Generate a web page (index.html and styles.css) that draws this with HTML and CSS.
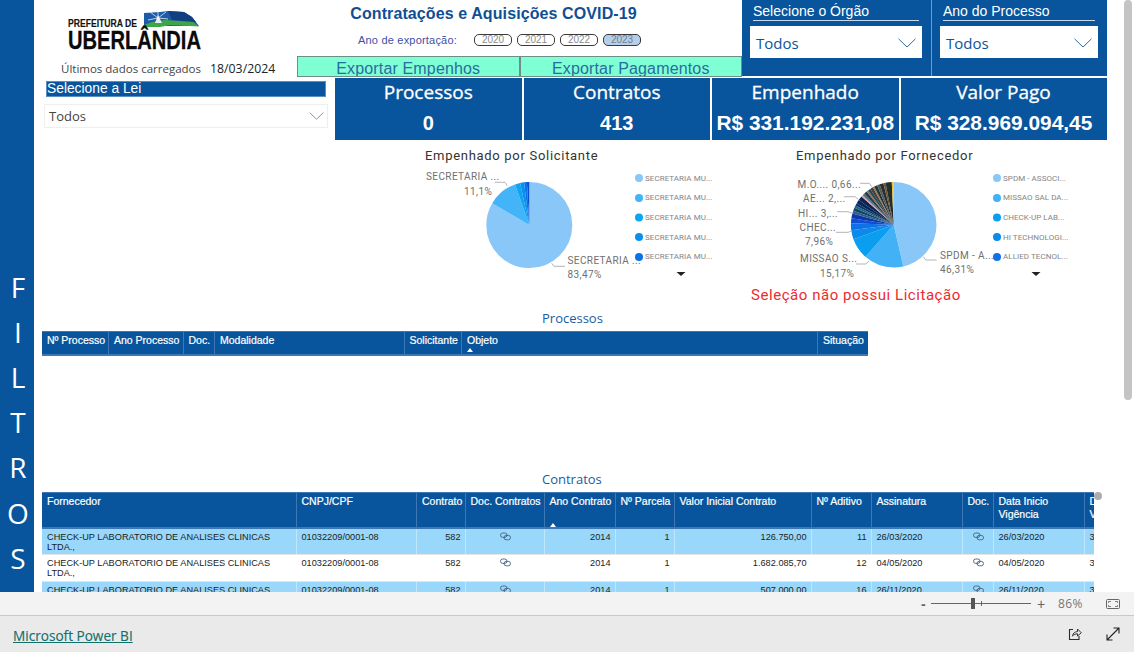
FILE: index.html
```html
<!DOCTYPE html>
<html lang="pt-BR">
<head>
<meta charset="utf-8">
<title>Contratações e Aquisições COVID-19</title>
<link rel="stylesheet" href="styles.css">
</head>
<body>
<svg class="defs" width="0" height="0" aria-hidden="true">
  <symbol id="chain" viewBox="0 0 11 9">
    <rect x="0.5" y="1" width="6.5" height="4.4" rx="2.2" fill="none" stroke="currentColor" stroke-width="0.9"/>
    <rect x="4" y="3.4" width="6.5" height="4.4" rx="2.2" fill="none" stroke="currentColor" stroke-width="0.9"/>
  </symbol>
  <symbol id="chev" viewBox="0 0 18 10">
    <path d="M0.5 0.8 L9 9 L17.5 0.8" fill="none" stroke="currentColor" stroke-width="1"/>
  </symbol>
</svg>
<div class="page">
  <div class="canvas">
    <aside class="side">
      <span>F</span><span>I</span><span>L</span><span>T</span><span>R</span><span>O</span><span>S</span>
    </aside>
    <main class="report">
      <header class="top">
        <div class="brand">
          <svg class="logo" viewBox="60 4 150 50" width="150" height="50">
            <polygon class="m-blue" points="144,13 160,12 168,11 184,12 192,17 199,26 144,26"/>
            <polygon class="m-dark" points="168,11 184,12 192,17 196,22 172,20"/>
            <polygon class="m-green" points="144,25 152,22 165,20 180,21 193,22 199,26.5 170,25 160,27 144,27"/>
            <polygon class="m-white" points="155,23 158,15 162,23"/>
            <path class="m-ray" d="M158 18 L150 12 M158 18 L166 12 M158 18 L158 11 M158 18 L148 20 M158 18 L168 19"/>
            <text class="l-small" x="68" y="26.5" textLength="69" lengthAdjust="spacingAndGlyphs">PREFEITURA DE</text>
            <text class="l-big" x="68" y="49" textLength="133" lengthAdjust="spacingAndGlyphs">UBERLÂNDIA</text>
          </svg>
          <div class="loaded"><span class="loaded-label">Últimos dados carregados</span><span class="loaded-date">18/03/2024</span></div>
        </div>
        <div class="center">
          <h1 class="title">Contratações e Aquisições COVID-19</h1>
          <div class="years">
            <span class="years-label">Ano de exportação:</span>
            <span class="pill">2020</span><span class="pill">2021</span><span class="pill">2022</span><span class="pill pill-on">2023</span>
          </div>
          <div class="exports">
            <button class="export">Exportar Empenhos</button>
            <button class="export">Exportar Pagamentos</button>
          </div>
        </div>
        <section class="slicer slicer-org">
          <div class="slicer-label">Selecione o Órgão</div>
          <div class="slicer-box"><span>Todos</span><svg class="chev-lg"><use href="#chev"/></svg></div>
        </section>
        <section class="slicer slicer-ano">
          <div class="slicer-label">Ano do Processo</div>
          <div class="slicer-box"><span>Todos</span><svg class="chev-lg"><use href="#chev"/></svg></div>
        </section>
      </header>

      <section class="second">
        <div class="lei">
          <div class="lei-label">Selecione a Lei</div>
          <div class="lei-box"><span>Todos</span><svg class="chev-sm"><use href="#chev"/></svg></div>
        </div>
        <div class="cards">
          <div class="card card-a"><div class="card-name">Processos</div><div class="card-val">0</div></div>
          <div class="card card-a"><div class="card-name">Contratos</div><div class="card-val">413</div></div>
          <div class="card card-a"><div class="card-name">Empenhado</div><div class="card-val card-money">R$ 331.192.231,08</div></div>
          <div class="card card-b"><div class="card-name">Valor Pago</div><div class="card-val card-money">R$ 328.969.094,45</div></div>
        </div>
      </section>

      <section class="charts">
        <svg class="chart chart-one" viewBox="420 145 300 165" width="300" height="165">
          <text class="c-title" x="425" y="160">Empenhado por Solicitante</text>
          <g class="pie" transform="rotate(-90 529.3 225)">
            <circle cx="529.3" cy="225" r="21.5" pathLength="100" stroke="#8AC7F9" stroke-dasharray="83.47 100"/>
            <circle cx="529.3" cy="225" r="21.5" pathLength="100" stroke="#42B4F7" stroke-dasharray="11.1 100" stroke-dashoffset="-83.47"/>
            <circle cx="529.3" cy="225" r="21.5" pathLength="100" stroke="#0BA5F2" stroke-dasharray="1.9 100" stroke-dashoffset="-94.57"/>
            <circle cx="529.3" cy="225" r="21.5" pathLength="100" stroke="#0A8FEE" stroke-dasharray="1.5 100" stroke-dashoffset="-96.47"/>
            <circle cx="529.3" cy="225" r="21.5" pathLength="100" stroke="#0A72E8" stroke-dasharray="1.1 100" stroke-dashoffset="-97.97"/>
            <circle cx="529.3" cy="225" r="21.5" pathLength="100" stroke="#0A4FD0" stroke-dasharray="0.93 100" stroke-dashoffset="-99.07"/>
          </g>
          <path class="leader" d="M495 182.3H505L507.3 185.7"/>
          <path class="leader" d="M551.7 263.3L554 266.3H565"/>
          <text class="c-label" x="426" y="180">SECRETARIA ...</text>
          <text class="c-label" x="464" y="195">11,1%</text>
          <text class="c-label" x="567.5" y="264">SECRETARIA ...</text>
          <text class="c-label" x="567.5" y="278">83,47%</text>
          <g class="legend">
            <circle cx="639" cy="178" r="4" fill="#8AC7F9"/><text x="645" y="181">SECRETARIA MU...</text>
            <circle cx="639" cy="198" r="4" fill="#42B4F7"/><text x="645" y="200">SECRETARIA MU...</text>
            <circle cx="639" cy="217.5" r="4" fill="#0BA5F2"/><text x="645" y="220">SECRETARIA MU...</text>
            <circle cx="639" cy="237" r="4" fill="#0A8FEE"/><text x="645" y="240">SECRETARIA MU...</text>
            <circle cx="639" cy="257" r="4" fill="#0A72E8"/><text x="645" y="259">SECRETARIA MU...</text>
          </g>
          <polygon class="more" points="676.5,272 685.5,272 681,276"/>
        </svg>
        <svg class="chart chart-two" viewBox="780 145 300 165" width="300" height="165">
          <text class="c-title" x="796" y="160">Empenhado por Fornecedor</text>
          <g class="pie pie-two" transform="rotate(-90 893.7 224.7)">
            <circle cx="893.7" cy="224.7" r="21.4" pathLength="100" stroke="#8AC7F9" stroke-dasharray="46.31 100"/>
            <circle cx="893.7" cy="224.7" r="21.4" pathLength="100" stroke="#42B1F5" stroke-dasharray="15.17 100" stroke-dashoffset="-46.31"/>
            <circle cx="893.7" cy="224.7" r="21.4" pathLength="100" stroke="#0A9EF0" stroke-dasharray="7.96 100" stroke-dashoffset="-61.48"/>
            <circle cx="893.7" cy="224.7" r="21.4" pathLength="100" stroke="#0A8BEC" stroke-dasharray="3.4 100" stroke-dashoffset="-69.44"/>
            <circle cx="893.7" cy="224.7" r="21.4" pathLength="100" stroke="#0E72E6" stroke-dasharray="2.7 100" stroke-dashoffset="-72.84"/>
            <circle cx="893.7" cy="224.7" r="21.4" pathLength="100" stroke="#0C4FD2" stroke-dasharray="2 100" stroke-dashoffset="-75.54"/>
            <circle cx="893.7" cy="224.7" r="21.4" pathLength="100" stroke="#0B35A8" stroke-dasharray="1.7 100" stroke-dashoffset="-77.54"/>
            <circle cx="893.7" cy="224.7" r="21.4" pathLength="100" stroke="#2F5F86" stroke-dasharray="1.1 100" stroke-dashoffset="-79.24"/>
            <circle cx="893.7" cy="224.7" r="21.4" pathLength="100" stroke="#12406A" stroke-dasharray="1.2 100" stroke-dashoffset="-80.34"/>
            <circle cx="893.7" cy="224.7" r="21.4" pathLength="100" stroke="#1E6A78" stroke-dasharray="0.9 100" stroke-dashoffset="-81.54"/>
            <circle cx="893.7" cy="224.7" r="21.4" pathLength="100" stroke="#0C3268" stroke-dasharray="1 100" stroke-dashoffset="-82.44"/>
            <circle cx="893.7" cy="224.7" r="21.4" pathLength="100" stroke="#08265A" stroke-dasharray="1.4 100" stroke-dashoffset="-83.44"/>
            <circle cx="893.7" cy="224.7" r="21.4" pathLength="100" stroke="#062650" stroke-dasharray="1.6 100" stroke-dashoffset="-84.84"/>
            <circle cx="893.7" cy="224.7" r="21.4" pathLength="100" stroke="#E59AA6" stroke-dasharray="0.7 100" stroke-dashoffset="-86.44"/>
            <circle cx="893.7" cy="224.7" r="21.4" pathLength="100" stroke="#56707F" stroke-dasharray="0.8 100" stroke-dashoffset="-87.14"/>
            <circle cx="893.7" cy="224.7" r="21.4" pathLength="100" stroke="#223C4C" stroke-dasharray="1.1 100" stroke-dashoffset="-87.94"/>
            <circle cx="893.7" cy="224.7" r="21.4" pathLength="100" stroke="#8A6F4A" stroke-dasharray="0.7 100" stroke-dashoffset="-89.04"/>
            <circle cx="893.7" cy="224.7" r="21.4" pathLength="100" stroke="#1D4A5E" stroke-dasharray="1 100" stroke-dashoffset="-89.74"/>
            <circle cx="893.7" cy="224.7" r="21.4" pathLength="100" stroke="#45403A" stroke-dasharray="1.1 100" stroke-dashoffset="-90.74"/>
            <circle cx="893.7" cy="224.7" r="21.4" pathLength="100" stroke="#A86F48" stroke-dasharray="0.6 100" stroke-dashoffset="-91.84"/>
            <circle cx="893.7" cy="224.7" r="21.4" pathLength="100" stroke="#173844" stroke-dasharray="1.2 100" stroke-dashoffset="-92.44"/>
            <circle cx="893.7" cy="224.7" r="21.4" pathLength="100" stroke="#5A5A4C" stroke-dasharray="1 100" stroke-dashoffset="-93.64"/>
            <circle cx="893.7" cy="224.7" r="21.4" pathLength="100" stroke="#282E32" stroke-dasharray="1.4 100" stroke-dashoffset="-94.64"/>
            <circle cx="893.7" cy="224.7" r="21.4" pathLength="100" stroke="#6E5434" stroke-dasharray="0.8 100" stroke-dashoffset="-96.04"/>
            <circle cx="893.7" cy="224.7" r="21.4" pathLength="100" stroke="#22302B" stroke-dasharray="2.4 100" stroke-dashoffset="-96.84"/>
            <circle cx="893.7" cy="224.7" r="21.4" pathLength="100" stroke="#E5C23A" stroke-dasharray="0.76 100" stroke-dashoffset="-99.24"/>
          </g>
          <path class="leader" d="M860 183.3H869.3L871.7 186.7"/>
          <path class="leader" d="M844 196.7H855L858.3 199.3"/>
          <path class="leader" d="M837.3 211.7H848.3L852.3 213.3"/>
          <path class="leader" d="M836 232.3H848.3L851.3 231"/>
          <path class="leader" d="M856 264H866L869 261"/>
          <path class="leader" d="M923.3 256.7L925.7 260H936.7"/>
          <text class="c-label" x="797.5" y="187.5">M.O.... 0,66...</text>
          <text class="c-label" x="803" y="202">AE... 2,...</text>
          <text class="c-label" x="798" y="216.5">HI... 3,...</text>
          <text class="c-label" x="799.5" y="231">CHEC...</text>
          <text class="c-label" x="805" y="244.5">7,96%</text>
          <text class="c-label" x="800" y="262">MISSAO S...</text>
          <text class="c-label" x="820" y="276.5">15,17%</text>
          <text class="c-label" x="940" y="258.5">SPDM - A...</text>
          <text class="c-label" x="940" y="272.5">46,31%</text>
          <g class="legend">
            <circle cx="997" cy="178" r="4" fill="#8AC7F9"/><text x="1003" y="181">SPDM - ASSOCI...</text>
            <circle cx="997" cy="198" r="4" fill="#42B1F5"/><text x="1003" y="200">MISSAO SAL DA...</text>
            <circle cx="997" cy="217.5" r="4" fill="#0A9EF0"/><text x="1003" y="220">CHECK-UP LAB...</text>
            <circle cx="997" cy="237" r="4" fill="#0A8BEC"/><text x="1003" y="240">HI TECHNOLOGI...</text>
            <circle cx="997" cy="257" r="4" fill="#0E72E6"/><text x="1003" y="259">ALLIED TECNOL...</text>
          </g>
          <polygon class="more" points="1031.5,272 1040.5,272 1036,276"/>
        </svg>
        <p class="no-bid">Seleção não possui Licitação</p>
      </section>

      <section class="processos">
        <h2 class="t-title">Processos</h2>
        <table class="grid grid-p">
          <thead><tr>
            <th class="p1">Nº Processo</th><th class="p2">Ano Processo</th><th class="p3">Doc.</th><th class="p4">Modalidade</th><th class="p5">Solicitante</th><th class="p6">Objeto<i class="sort"></i></th><th class="p7">Situação</th>
          </tr></thead>
        </table>
      </section>

      <section class="contratos">
        <h2 class="t-title">Contratos</h2>
        <div class="grid-clip">
          <table class="grid grid-c">
            <thead><tr>
              <th class="c1">Fornecedor</th><th class="c2">CNPJ/CPF</th><th class="c3">Contrato</th><th class="c4">Doc. Contratos</th><th class="c5">Ano Contrato<i class="sort"></i></th><th class="c6">Nº Parcela</th><th class="c7">Valor Inicial Contrato</th><th class="c8">Nº Aditivo</th><th class="c9">Assinatura</th><th class="c10">Doc.</th><th class="c11 wrap">Data Inicio Vigência</th><th class="c12 wrap">Data Fim Vigência</th>
            </tr></thead>
            <tbody>
              <tr class="alt"><td>CHECK-UP LABORATORIO DE ANALISES CLINICAS LTDA.,</td><td>01032209/0001-08</td><td class="num">582</td><td class="mid"><svg class="chain"><use href="#chain"/></svg></td><td class="num">2014</td><td class="num">1</td><td class="num">126.750,00</td><td class="num">11</td><td>26/03/2020</td><td class="mid"><svg class="chain"><use href="#chain"/></svg></td><td>26/03/2020</td><td>30/03/2021</td></tr>
              <tr><td>CHECK-UP LABORATORIO DE ANALISES CLINICAS LTDA.,</td><td>01032209/0001-08</td><td class="num">582</td><td class="mid"><svg class="chain"><use href="#chain"/></svg></td><td class="num">2014</td><td class="num">1</td><td class="num">1.682.085,70</td><td class="num">12</td><td>04/05/2020</td><td class="mid"><svg class="chain"><use href="#chain"/></svg></td><td>04/05/2020</td><td>30/03/2021</td></tr>
              <tr class="alt"><td>CHECK-UP LABORATORIO DE ANALISES CLINICAS LTDA.,</td><td>01032209/0001-08</td><td class="num">582</td><td class="mid"><svg class="chain"><use href="#chain"/></svg></td><td class="num">2014</td><td class="num">1</td><td class="num">507.000,00</td><td class="num">16</td><td>26/11/2020</td><td class="mid"><svg class="chain"><use href="#chain"/></svg></td><td>26/11/2020</td><td>30/03/2021</td></tr>
            </tbody>
          </table>
        </div>
        <span class="h-dot"></span>
      </section>
      <span class="v-thumb"></span>
    </main>
  </div>

  <div class="zoombar">
    <span class="z-minus">-</span>
    <div class="z-track"><span class="z-handle"></span><span class="z-tick"></span></div>
    <span class="z-plus">+</span>
    <span class="z-pct">86%</span>
    <svg class="z-fit" viewBox="0 0 14 10" width="14" height="10">
      <rect x="0.5" y="0.5" width="13" height="9" rx="1" fill="none" stroke="#666"/>
      <path d="M2.5 4V2.5H5M9 2.5H11.5V4M11.5 6V7.5H9M5 7.5H2.5V6" fill="none" stroke="#666" stroke-width="0.8"/>
    </svg>
  </div>

  <footer class="footer">
    <a class="pbi" href="#">Microsoft Power BI</a>
    <div class="foot-icons">
      <svg viewBox="0 0 14 14" width="14" height="14">
        <path d="M5 2.5H1.5V12.5H11V9" fill="none" stroke="#3A1F4A" stroke-width="1.1"/>
        <path d="M4.5 9C5 6 7 4.6 9.5 4.6V2L13.3 5.8L9.5 9V6.8C7.5 6.8 6 7.4 4.5 9Z" fill="none" stroke="#333" stroke-width="1"/>
      </svg>
      <svg viewBox="0 0 14 14" width="14" height="14">
        <path d="M1 13L13 1M7.5 1H13V6.5M1 7.5V13H6.5" fill="none" stroke="#222" stroke-width="1.1"/>
      </svg>
    </div>
  </footer>
</div>
</body>
</html>
```
FILE: styles.css
```css
* { box-sizing: border-box; }
html, body { margin: 0; height: 100%; overflow: hidden; background: #fff; }
body { font-family: "Liberation Sans", Arial, sans-serif; }
.defs { position: absolute; }
.page { display: flex; flex-direction: column; height: 652px; }

.canvas { display: flex; height: 592px; overflow: hidden; background: #fff; }
.side {
  width: 34px; flex: none; background: #08559D; color: #fff;
  display: flex; flex-direction: column; align-items: center; justify-content: flex-end;
  padding-bottom: 11px; padding-left: 2px;
  font: 28px/45.2px "Open Sans", sans-serif;
}
.report { position: relative; flex: 1; min-width: 0; }

/* top */
.top { display: flex; height: 78px; }
.brand { width: 263px; flex: none; }
.logo { display: block; margin: 4px 0 0 26px; }
.m-blue { fill: #1C5BA8; }
.m-dark { fill: #123F7F; }
.m-green { fill: #3FA648; }
.m-white { fill: #E6EEF2; }
.m-ray { stroke: #fff; stroke-width: 0.7; fill: none; }
.l-small { font: 700 11.5px "Liberation Sans", sans-serif; fill: #111; stroke: #111; stroke-width: 0.15px; }
.l-big { font: 700 25px "Liberation Sans", sans-serif; fill: #0A0A0A; stroke: #0A0A0A; stroke-width: 0.3px; }
.loaded { display: flex; margin-top: 7px; padding-left: 27px; align-items: center; color: #333; height: 15px; }
.loaded-label { font: 11.5px "Open Sans", sans-serif; width: 149px; color: #444; white-space: nowrap; }
.loaded-date { font: 12.3px "Open Sans", sans-serif; color: #222; }

.center { width: 445px; flex: none; display: flex; flex-direction: column; }
.title { margin: 5px 0 0; text-align: center; font: 700 16px/18px "Liberation Sans", sans-serif; color: #0F4F94; padding-right: 52px; letter-spacing: 0.1px; white-space: nowrap; }
.years { display: flex; align-items: center; height: 12px; margin-top: 11px; padding-left: 61px; }
.years-label { font: 11px "Liberation Sans", sans-serif; color: #3C50A8; width: 116px; letter-spacing: 0.2px; white-space: nowrap; }
.pill { width: 38px; height: 12px; margin-right: 5px; border: 1px solid #3A3A3A; border-radius: 5px; font: 10px/10px "Liberation Sans", sans-serif; color: #8A8A8A; text-align: center; }
.pill-on { background: #B5CFE9; color: #6F7F90; }
.exports { display: flex; margin-top: 10px; }
.export {
  width: 222.5px; height: 21px; padding: 0; border: 1px solid #6F8D88; background: #7FFFD4;
  font: 16px/24px "Liberation Sans", sans-serif; color: #2A6CA0; letter-spacing: 0.15px; overflow: hidden;
}

.slicer { height: 76px; background: #08559D; flex: none; color: #fff; }
.slicer-org { width: 190px; padding: 3px 9px 0 8px; border-right: 1px solid #6F9CC6; }
.slicer-ano { width: 175px; padding: 3px 9px 0 8px; }
.slicer-label { font: 14px/16px "Liberation Sans", sans-serif; border-bottom: 1px solid #C7D9EA; height: 18px; margin: 0 3px 5px; }
.slicer-box { height: 32px; background: #fff; color: #0C559C; display: flex; align-items: center; justify-content: space-between; padding: 2px 6px 0 6px; font: 15px "Open Sans", sans-serif; }
.chev-lg { width: 18px; height: 10px; color: #2F6EA8; }

/* second row */
.second { display: flex; height: 62px; }
.lei { width: 301px; flex: none; padding: 3px 7px 0 10px; }
.lei-label { margin: 0 0 7px 2px; height: 16px; width: 280px; background: #08559D; border: 1px solid #5B8FBF; color: #fff; font: 13.8px/14px "Liberation Sans", sans-serif; white-space: nowrap; }
.lei-box { height: 24px; width: 284px; border: 1px solid #EEE; display: flex; align-items: center; justify-content: space-between; padding: 0 3px 0 4px; font: 13px "Open Sans", sans-serif; color: #444; }
.chev-sm { width: 15px; height: 8px; color: #777; }
.cards { display: flex; gap: 2px; }
.card { background: #08559D; color: #fff; text-align: center; height: 62px; }
.card-a { width: 186.5px; }
.card-b { width: 206px; }
.card-name { font: 19px/27px "Open Sans", sans-serif; -webkit-text-stroke: 0.3px #fff; margin-top: 1px; }
.card-val { font: 700 20px/30px "Liberation Sans", sans-serif; white-space: nowrap; margin-top: 2px; }
.card-money { font-size: 20.9px; }

/* charts */
.charts { position: relative; display: flex; height: 171px; padding: 5px 0 0 386px; gap: 60px; }
.chart { display: block; flex: none; }
.c-title { font: 13px "Roboto", sans-serif; fill: #333; letter-spacing: 0.7px; }
.pie circle { fill: none; stroke-width: 43; }
.pie-two circle { stroke-width: 42.8; }
.leader { fill: none; stroke: #B5B5B5; stroke-width: 1; }
.c-label { font: 10px "Roboto", sans-serif; fill: #707070; letter-spacing: 0.4px; }
.legend text { font: 8px "Roboto", sans-serif; fill: #858585; letter-spacing: 0.05px; }
.more { fill: #222; }
.no-bid { position: absolute; left: 717px; top: 146px; margin: 0; font: 15px "Roboto", sans-serif; color: #EE2A2E; letter-spacing: 0.55px; white-space: nowrap; }

/* tables */
.t-title { margin: 0; font: 400 13px/16px "Open Sans", sans-serif; color: #1A5C9E; }
.processos { height: 162px; padding: 0 0 0 8px; }
.processos .t-title { padding-left: 500px; margin-top: -1px; margin-bottom: 5px; }
.contratos { position: relative; padding-left: 8px; }
.contratos .t-title { padding-left: 500px; margin-bottom: 5px; margin-top: -1px; }
.grid { border-collapse: collapse; table-layout: fixed; font-family: "Liberation Sans", sans-serif; }
.grid th {
  background: #08559D; color: #fff; font: 400 10.5px/13px "Liberation Sans", sans-serif; -webkit-text-stroke: 0.2px #fff;
  text-align: left; vertical-align: top; padding: 1.5px 0 0 5px; white-space: nowrap;
  border-right: 1px solid #3E78B4; border-top: 1px solid #3E78B4; border-bottom: 2px solid #3E78B4;
}
.grid th.wrap { white-space: normal; padding-right: 4px; }
.grid th:last-child { border-right: 0; }
.grid-p { width: 826px; }
.grid-p th { height: 23px; padding-top: 2px; }
.p1 { width: 66.5px; } .p2 { width: 74.5px; } .p3 { width: 31.5px; } .p4 { width: 189.5px; }
.p5 { width: 57.5px; } .p6 { width: 356px; } .p7 { width: 50.5px; }
.sort { display: block; width: 0; height: 0; margin: 1px 0 0 0; border: 3.5px solid transparent; border-top: 0; border-bottom: 4px solid #fff; }
.grid-c .sort { margin-top: 15px; }

.grid-clip { width: 1052px; overflow: hidden; }
.grid-c { width: 1102px; }
.grid-c th { height: 35px; }
.c1 { width: 254px; } .c2 { width: 120.5px; } .c3 { width: 48.5px; } .c4 { width: 79px; }
.c5 { width: 71px; } .c6 { width: 59px; } .c7 { width: 137px; } .c8 { width: 60px; }
.c9 { width: 91px; } .c10 { width: 31px; } .c11 { width: 91px; } .c12 { width: 60px; }
.grid-c td { height: 27px; padding: 3px 4px 0 5px; vertical-align: top; font-size: 9.2px; line-height: 10px; color: #222; border-bottom: 1px solid #E6E6E6; border-right: 1px solid #fff; }
.alt td { background: #99D8FA; border-right-color: #BEE6FC; }
.num { text-align: right; }
.mid { text-align: center; }
.chain { width: 11px; height: 9px; color: #44607E; display: inline-block; }
.h-dot { position: absolute; left: 1060px; top: 21px; width: 8px; height: 8px; border-radius: 50%; background: #ADADAD; }
.v-thumb { position: absolute; left: 1090px; top: 0; width: 8px; height: 400px; border-radius: 4px; background: #C4C4C4; }

/* bottom */
.zoombar { height: 24px; background: #F3F3F3; border-bottom: 1px solid #C9C9C9; display: flex; align-items: center; padding-left: 921px; color: #666; }
.z-minus { width: 10px; font: 700 14px "Liberation Sans", sans-serif; }
.z-track { position: relative; width: 100px; height: 1px; background: #666; }
.z-handle { position: absolute; left: 40px; top: -5px; width: 4px; height: 11px; background: #555; }
.z-tick { position: absolute; left: 50px; top: -2px; width: 1px; height: 5px; background: #666; }
.z-plus { width: 27px; padding-left: 6px; font: 14px "Liberation Sans", sans-serif; }
.z-pct { width: 49px; font: 12px "Open Sans", sans-serif; color: #777; letter-spacing: 0.4px; }
.z-fit { flex: none; margin-left: -1px; }

.footer { flex: 1; background: #EAEAEA; display: flex; align-items: center; justify-content: space-between; padding: 2px 14px 0 13px; }
.pbi { font: 13.6px "Open Sans", sans-serif; color: #12706C; text-decoration: underline; -webkit-text-stroke: 0.15px #12706C; }
.foot-icons { display: flex; gap: 24px; margin-top: -2px; }
```
